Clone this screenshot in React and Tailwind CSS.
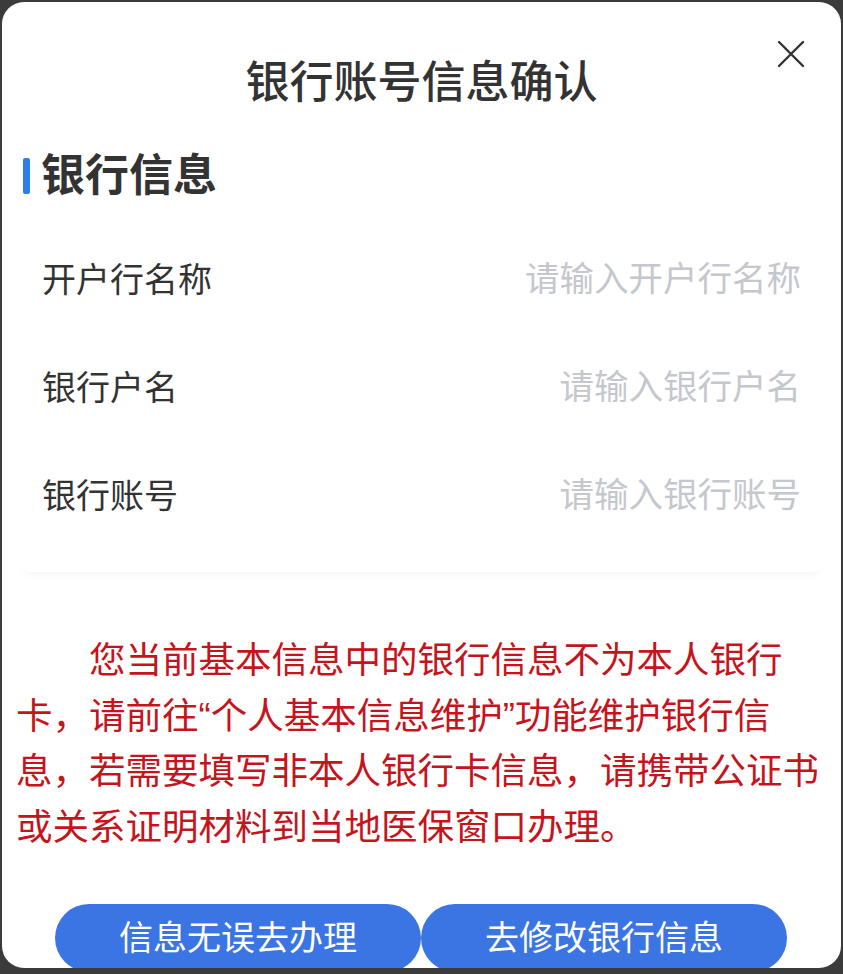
export default function App() {

  const fields = [
    { label: "开户行名称", placeholder: "请输入开户行名称" },
    { label: "银行户名", placeholder: "请输入银行户名" },
    { label: "银行账号", placeholder: "请输入银行账号" },
  ];

  return (

    <div
      className="w-[843px] h-[974px] bg-[#3b3b3b] pt-[2px] px-[2px] pb-[6px]"
      style={{ fontFamily: '"Liberation Sans", "Noto Sans CJK SC", sans-serif' }}
    >

      <div className="relative h-[966px] bg-white rounded-[22px] overflow-hidden flex flex-col">

        {/* Header */}

        <div className="pt-[52px] text-center text-[44px] leading-[58px] font-medium text-[#333333]">
          银行账号信息确认
        </div>

        <button className="absolute top-[38px] right-[36px] w-[28px] h-[28px] text-[#333333]">
          <svg viewBox="0 0 28 28" className="w-full h-full" fill="none" stroke="currentColor" strokeWidth="2.4" strokeLinecap="round">
            <path d="M2 2 L26 26 M26 2 L2 26" />
          </svg>
        </button>

        {/* Card */}

        <div className="mx-[14px] mt-[39px] pb-[22px] bg-white rounded-b-[16px] shadow-[0_10px_8px_-8px_rgba(0,0,0,0.05)]">

          <div className="flex items-center h-[50px]">
            <div className="ml-[7px] w-[7px] h-[36px] rounded-[2px] bg-[#2f7fe8]" />
            <div className="ml-[11px] text-[44px] leading-[50px] font-semibold text-[#333333]">
              银行信息
            </div>
          </div>

          <div className="mt-[25px] pl-[26px] pr-[26px]">
            {fields.map((field) => (
              <div key={field.label} className="flex items-center justify-between h-[108px]">
                <div className="text-[34px] text-[#333333]">{field.label}</div>
                <div className="text-[34.5px] text-[#c4c7cd]">{field.placeholder}</div>
              </div>
            ))}
          </div>

        </div>

        {/* Notice */}

        <div className="mt-[61px] px-[14px] text-[36.5px] leading-[55.5px] text-[#c6141c] indent-[2em]">
          您当前基本信息中的银行信息不为本人银行卡，请前往“个人基本信息维护”功能维护银行信息，若需要填写非本人银行卡信息，请携带公证书或关系证明材料到当地医保窗口办理。
        </div>

        {/* Actions */}

        <div className="mt-[49px] pl-[53px] pr-[51px] flex">
          <button className="w-[366px] h-[68px] rounded-full bg-[#3b74e3] text-white text-[34px]">
            信息无误去办理
          </button>
          <button className="w-[366px] h-[68px] rounded-full bg-[#3b74e3] text-white text-[34px]">
            去修改银行信息
          </button>
        </div>

      </div>

    </div>

  );
}
